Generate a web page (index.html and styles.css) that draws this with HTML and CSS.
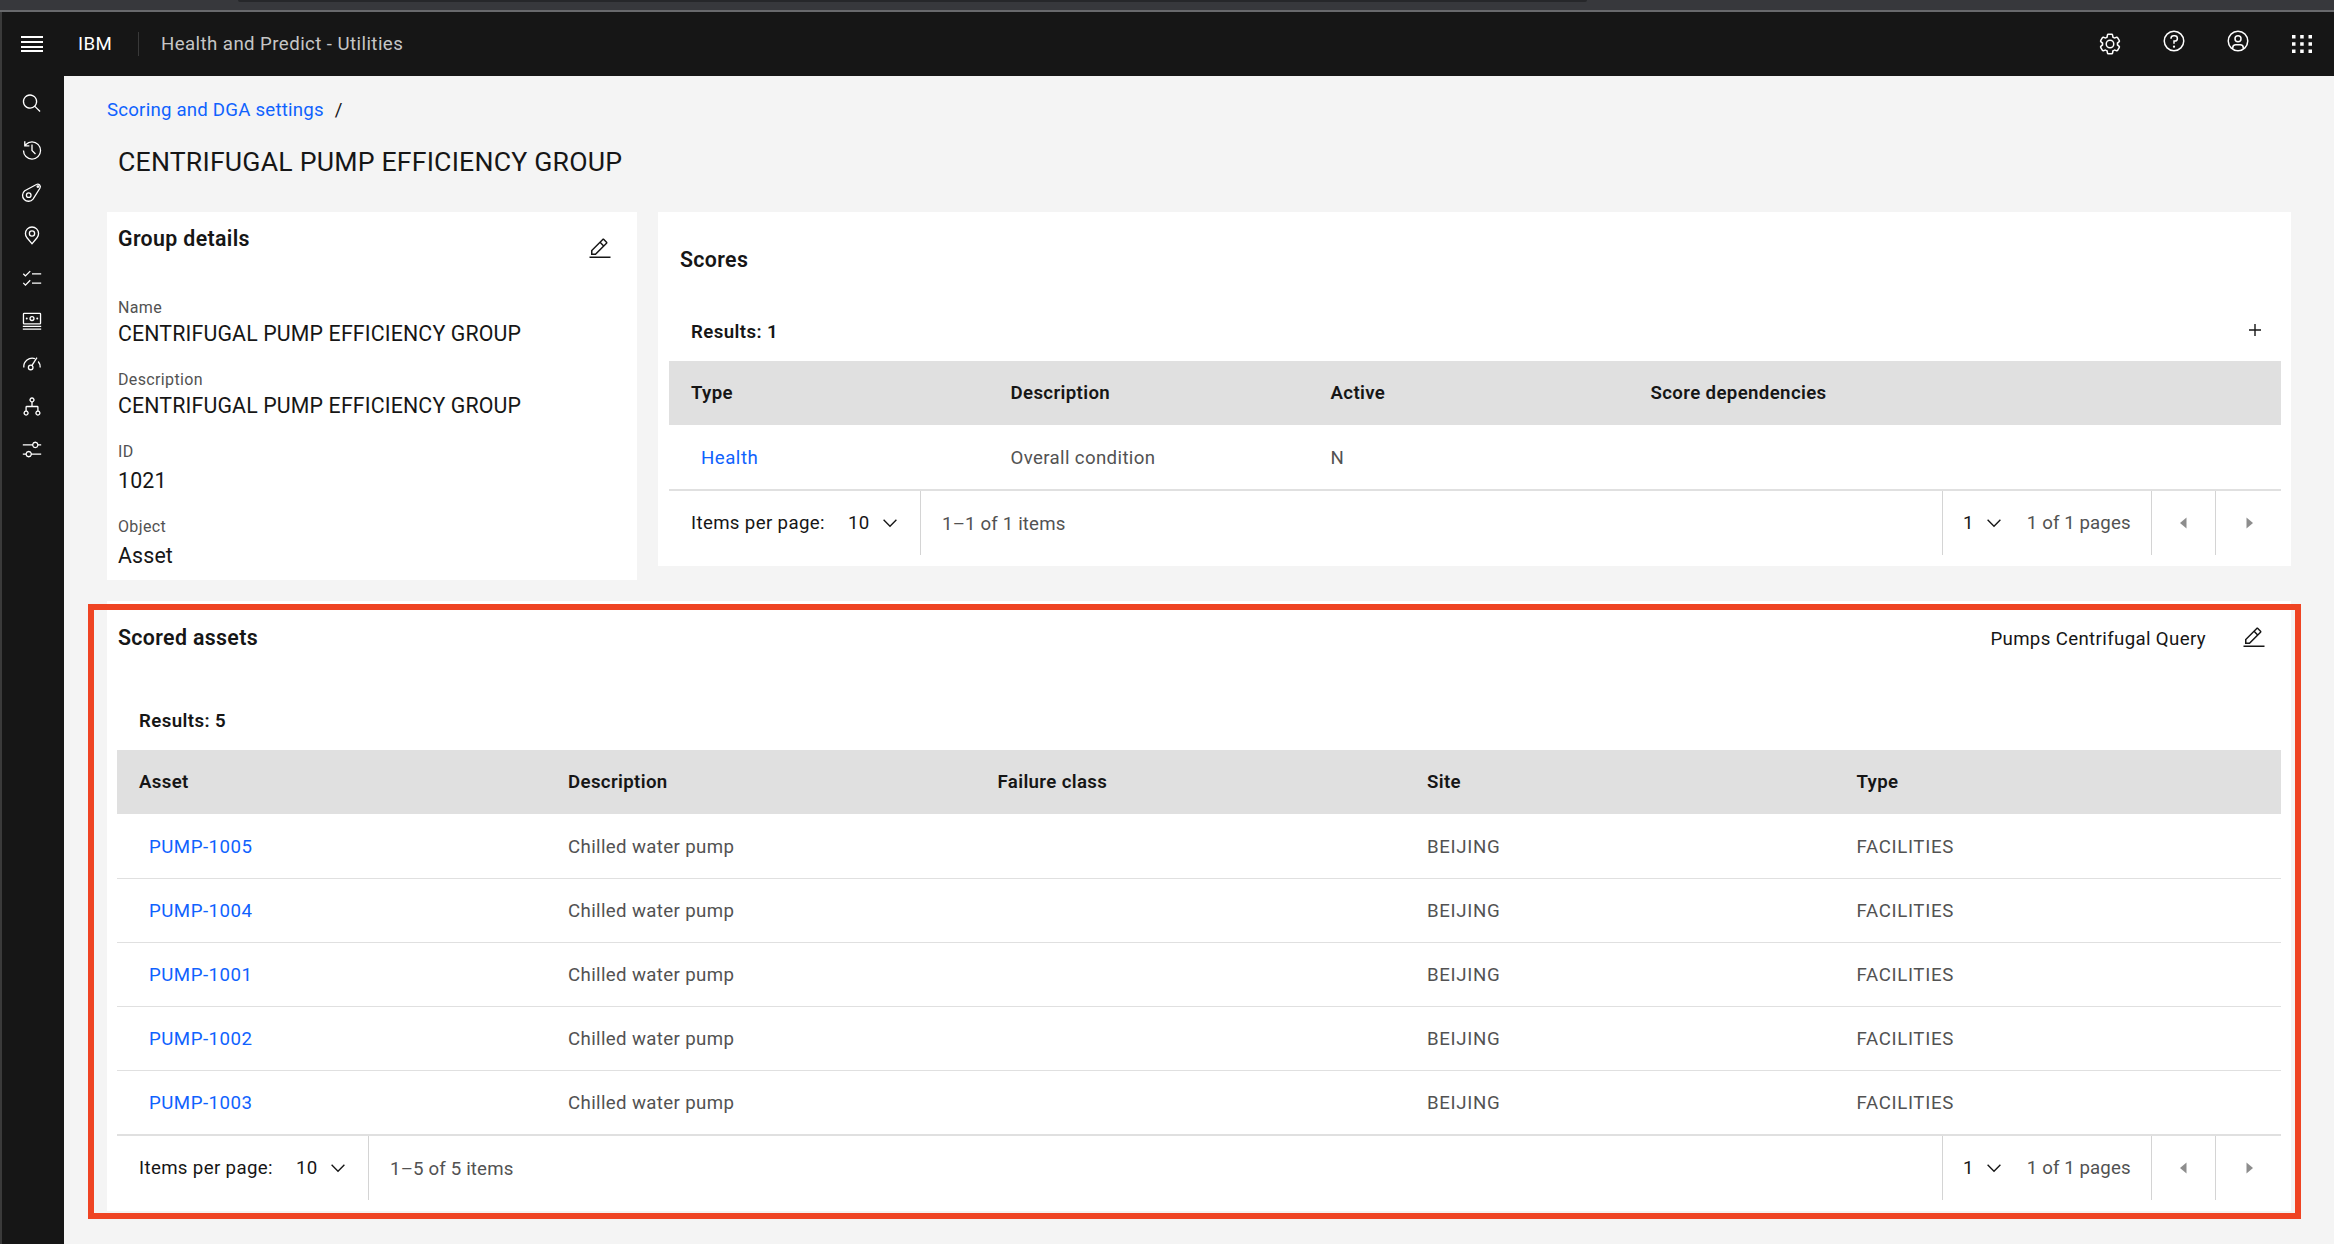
FILE: index.html
```html
<!DOCTYPE html>
<html lang="en">
<head>
    <meta charset="UTF-8">
    <meta name="viewport" content="width=device-width, initial-scale=1.0">
    <title>Health and Predict - Utilities</title>
    <link rel="stylesheet" href="styles.css">
</head>
<body>
    <svg class="sprites" xmlns="http://www.w3.org/2000/svg">
        <symbol id="i-edit" viewBox="0 0 32 32"><path d="M2 26H30V28H2zM25.4 9c.8-.8.8-2 0-2.8l-3.6-3.6c-.8-.8-2-.8-2.8 0l-15 15V24h6.4L25.4 9zM20.4 4L24 7.6l-3 3L17.4 7 20.4 4zM6 22v-3.6l10-10 3.6 3.6-10 10H6z"/></symbol>
        <symbol id="i-chevron" viewBox="0 0 16 16"><path d="M8 11L3 6l.7-.7L8 9.6l4.3-4.3.7.7z"/></symbol>
        <symbol id="i-prev" viewBox="0 0 16 16"><path d="M10.5 2.5v11L4 8z"/></symbol>
        <symbol id="i-next" viewBox="0 0 16 16"><path d="M5.5 2.5v11L12 8z"/></symbol>
    </svg>

    <div class="browser-strip"><div class="browser-tab"></div></div>

    <header class="topbar">
        <svg class="menu-icon" viewBox="0 0 22 18"><path d="M0 1h22v2H0zM0 6h22v2H0zM0 11h22v2H0zM0 15h22v2H0z"/></svg>
        <span class="brand">IBM</span>
        <span class="app-name">Health and Predict - Utilities</span>
        <div class="topbar-actions">
            <svg class="top-icon" viewBox="0 0 32 32"><path d="M27,16.76c0-.25,0-.5,0-.76s0-.51,0-.77l1.92-1.68A2,2,0,0,0,29.3,11L26.94,7a2,2,0,0,0-1.73-1,2,2,0,0,0-.64.1l-2.43.82a11.35,11.35,0,0,0-1.31-.75l-.51-2.52a2,2,0,0,0-2-1.61H13.64a2,2,0,0,0-2,1.61l-.51,2.52a11.48,11.48,0,0,0-1.32.75L7.43,6.06A2,2,0,0,0,6.79,6,2,2,0,0,0,5.06,7L2.7,11a2,2,0,0,0,.41,2.51L5,15.24c0,.25,0,.5,0,.76s0,.51,0,.77L3.11,18.45A2,2,0,0,0,2.7,21L5.06,25a2,2,0,0,0,1.73,1,2,2,0,0,0,.64-.1l2.43-.82a11.35,11.35,0,0,0,1.31.75l.51,2.52a2,2,0,0,0,2,1.61h4.72a2,2,0,0,0,2-1.61l.51-2.52a11.48,11.48,0,0,0,1.32-.75l2.42.82a2,2,0,0,0,.64.1,2,2,0,0,0,1.73-1L29.3,21a2,2,0,0,0-.41-2.51ZM25.21,24l-3.43-1.16a8.86,8.86,0,0,1-2.71,1.57L18.36,28H13.64l-.71-3.55a9.36,9.36,0,0,1-2.7-1.57L6.79,24,4.43,20l2.72-2.4a8.9,8.9,0,0,1,0-3.13L4.43,12,6.79,8l3.43,1.16a8.86,8.86,0,0,1,2.71-1.57L13.64,4h4.72l.71,3.55a9.36,9.36,0,0,1,2.7,1.57L25.21,8,27.57,12l-2.72,2.4a8.9,8.9,0,0,1,0,3.13L27.57,20Z"/><path d="M16,22a6,6,0,1,1,6-6A5.94,5.94,0,0,1,16,22Zm0-10a3.91,3.91,0,0,0-4,4,3.91,3.91,0,0,0,4,4,3.91,3.91,0,0,0,4-4A3.91,3.91,0,0,0,16,12Z"/></svg>
            <svg class="top-icon up" viewBox="0 0 32 32"><path d="M16 2a14 14 0 1014 14A14 14 0 0016 2zm0 26a12 12 0 1112-12 12 12 0 01-12 12z"/><circle cx="16" cy="23.5" r="1.5"/><path d="M17 8h-1.5a4.49 4.49 0 00-4.5 4.5v.5h2v-.5a2.5 2.5 0 012.5-2.5H17a2.5 2.5 0 010 5h-2v4.5h2V17a4.5 4.5 0 000-9z"/></svg>
            <svg class="top-icon up" viewBox="0 0 32 32"><path d="M16 8a5 5 0 105 5 5 5 0 00-5-5zm0 8a3 3 0 113-3 3 3 0 01-3 3z"/><path d="M16 2a14 14 0 1014 14A14 14 0 0016 2zM10 26.37V25a3 3 0 013-3h6a3 3 0 013 3v1.37a11.9 11.9 0 01-12 0zm14-1.45V25a5 5 0 00-5-5H13a5 5 0 00-5 5v-.08a12 12 0 1116 0z"/></svg>
            <svg class="switcher" viewBox="0 0 20 18"><path d="M0 0h3.5v3.5H0zM8.2 0h3.5v3.5H8.2zM16.5 0H20v3.5h-3.5zM0 7.2h3.5v3.5H0zM8.2 7.2h3.5v3.5H8.2zM16.5 7.2H20v3.5h-3.5zM0 14.5h3.5V18H0zM8.2 14.5h3.5V18H8.2zM16.5 14.5H20V18h-3.5z"/></svg>
        </div>
    </header>

    <div class="shell">
        <nav class="sidenav">
            <svg class="nav-first" viewBox="0 0 32 32"><path d="M29 27.59l-7.55-7.55a11 11 0 10-1.41 1.41L27.59 29zM4 13a9 9 0 119 9 9 9 0 01-9-9z"/></svg>
            <svg viewBox="0 0 32 32"><path d="M20.59 22L15 16.41V7h2v8.58l5 5.01L20.59 22z"/><path d="M16 2A13.94 13.94 0 006 6.23V2H4v8h8V8H7.08A12 12 0 1116 28 12 12 0 014 16H2A14 14 0 1016 2z"/></svg>
            <svg class="nav-stroke" viewBox="0 0 32 32"><path d="M5 13.300L22.700 3.800A4 4 0 0128 9.500L17.600 26A9 9 0 115 13.300z"/><circle cx="11" cy="20" r="3.500"/><circle cx="25" cy="7" r="1.200"/></svg>
            <svg viewBox="0 0 32 32"><path d="M16 18a5 5 0 115-5 5 5 0 01-5 5zm0-8a3 3 0 103 3 3 3 0 00-3-3z"/><path d="M16 30l-8.440-9.950c-.05-.06-.35-.45-.35-.45A10.890 10.890 0 015 13a11 11 0 0122 0 10.880 10.880 0 01-2.210 6.600s-.3.390-.35.450zM8.810 18.400s.23.310.29.370L16 26.910l6.910-8.150c.04-.06.280-.37.280-.37A8.900 8.900 0 0025 13a9 9 0 00-18 0 8.910 8.910 0 001.810 5.400z"/></svg>
            <svg viewBox="0 0 32 32"><path d="M16 8h14v2H16zM16 22h14v2H16zM6 10.590L3.410 8 2 9.410l4 4 8-8L12.590 4zM6 24.590L3.410 22 2 23.410l4 4 8-8L12.590 18z"/></svg>
            <svg viewBox="0 0 32 32"><path d="M2 24h28v2H2zM2 28h28v2H2zM28 4H4a2 2 0 00-2 2v14a2 2 0 002 2h24a2 2 0 002-2V6a2 2 0 00-2-2zm0 16H4V6h24z"/><path d="M16 9a4 4 0 104 4 4 4 0 00-4-4zm0 6a2 2 0 112-2 2 2 0 01-2 2z"/><circle cx="8" cy="13" r="1.500"/><circle cx="24" cy="13" r="1.500"/></svg>
            <svg class="nav-stroke" viewBox="0 0 32 32"><path d="M3.500 22A13 13 0 0120.500 8.500"/><path d="M25.500 13A13 13 0 0128.500 22"/><path d="M16 19L23.500 7"/><circle cx="14" cy="22" r="3.500"/></svg>
            <svg viewBox="0 0 32 32"><path d="M26 22.100V17a2 2 0 00-2-2h-7v-5.100a4 4 0 10-2 0V15H8a2 2 0 00-2 2v5.100a4 4 0 102 0V17h16v5.100a4 4 0 102 0zM14 6a2 2 0 112 2 2 2 0 01-2-2zM9 26a2 2 0 11-2-2 2 2 0 012 2zm18 0a2 2 0 11-2-2 2 2 0 012 2z"/></svg>
            <svg viewBox="0 0 32 32"><path d="M30 8h-4.100a5 5 0 00-9.800 0H2v2h14.100a5 5 0 009.800 0H30zM21 12a3 3 0 113-3 3 3 0 01-3 3zM2 24h4.100a5 5 0 009.800 0H30v-2H15.900a5 5 0 00-9.800 0H2zm9-4a3 3 0 11-3 3 3 3 0 013-3z"/></svg>
        </nav>

        <main class="content">
            <div class="breadcrumb"><a href="#">Scoring and DGA settings</a><span class="crumb-sep">/</span></div>
            <h1 class="page-title">CENTRIFUGAL PUMP EFFICIENCY GROUP</h1>

            <div class="top-row">
                <section class="card details-card">
                    <div class="details-head">
                        <h2 class="card-title">Group details</h2>
                        <svg class="edit-icon"><use href="#i-edit"/></svg>
                    </div>
                    <div class="field"><div class="field-label">Name</div><div class="field-value">CENTRIFUGAL PUMP EFFICIENCY GROUP</div></div>
                    <div class="field"><div class="field-label">Description</div><div class="field-value">CENTRIFUGAL PUMP EFFICIENCY GROUP</div></div>
                    <div class="field field-low"><div class="field-label">ID</div><div class="field-value">1021</div></div>
                    <div class="field field-low"><div class="field-label">Object</div><div class="field-value">Asset</div></div>
                </section>

                <section class="card scores-card">
                    <h2 class="card-title">Scores</h2>
                    <div class="toolbar">
                        <span class="results">Results: 1</span>
                        <svg class="plus-icon" viewBox="0 0 12 12"><path d="M5.300 0h1.400v5.300H12v1.400H6.700V12H5.300V6.700H0V5.300h5.300z"/></svg>
                    </div>
                    <table class="data-table scores-table">
                        <thead><tr><th>Type</th><th>Description</th><th>Active</th><th>Score dependencies</th></tr></thead>
                        <tbody><tr><td><a href="#">Health</a></td><td>Overall condition</td><td>N</td><td></td></tr></tbody>
                    </table>
                    <div class="pager">
                        <div class="pager-size"><span>Items per page:</span><span class="pager-num">10</span><svg class="chevron"><use href="#i-chevron"/></svg></div>
                        <div class="pager-count">1–1 of 1 items</div>
                        <div class="pager-page"><span class="pager-num">1</span><svg class="chevron"><use href="#i-chevron"/></svg><span class="pager-of">1 of 1 pages</span></div>
                        <div class="pager-btn"><svg class="caret"><use href="#i-prev"/></svg></div>
                        <div class="pager-btn pager-last"><svg class="caret"><use href="#i-next"/></svg></div>
                    </div>
                </section>
            </div>

            <section class="card assets-card">
                <div class="assets-head">
                    <h2 class="card-title">Scored assets</h2>
                    <span class="query-name">Pumps Centrifugal Query</span>
                    <svg class="edit-icon"><use href="#i-edit"/></svg>
                </div>
                <div class="results assets-results">Results: 5</div>
                <table class="data-table assets-table">
                    <thead><tr><th>Asset</th><th>Description</th><th>Failure class</th><th>Site</th><th>Type</th></tr></thead>
                    <tbody id="assetRows"></tbody>
                </table>
                <div class="pager">
                    <div class="pager-size"><span>Items per page:</span><span class="pager-num">10</span><svg class="chevron"><use href="#i-chevron"/></svg></div>
                    <div class="pager-count">1–5 of 5 items</div>
                    <div class="pager-page"><span class="pager-num">1</span><svg class="chevron"><use href="#i-chevron"/></svg><span class="pager-of">1 of 1 pages</span></div>
                    <div class="pager-btn"><svg class="caret"><use href="#i-prev"/></svg></div>
                    <div class="pager-btn pager-last"><svg class="caret"><use href="#i-next"/></svg></div>
                </div>
                <div class="callout"></div>
            </section>
        </main>
    </div>

    <script>
        const assets = ["PUMP-1005", "PUMP-1004", "PUMP-1001", "PUMP-1002", "PUMP-1003"];
        document.getElementById('assetRows').innerHTML = assets.map(asset =>
            `<tr><td><a href="#">${asset}</a></td><td>Chilled water pump</td><td></td><td class="caps">BEIJING</td><td class="caps">FACILITIES</td></tr>`
        ).join('');
    </script>
</body>
</html>
```

FILE: styles.css
```css
* {
    box-sizing: border-box;
}

body {
    margin: 0;
    height: 1244px;
    overflow: hidden;
    background: #f4f4f4;
    color: #161616;
    font-family: Roboto, "Noto Sans", sans-serif;
    font-size: 18.67px;
    letter-spacing: 0.36px;
}

a {
    color: #0f62fe;
    text-decoration: none;
}

.sprites {
    display: none;
}

.browser-strip {
    height: 12px;
    background: #37383c;
    border-bottom: 2px solid #68696c;
    padding-left: 238px;
}

.browser-tab {
    width: 1349px;
    height: 2px;
    background: #26272a;
    border-radius: 0 0 6px 6px;
}

.topbar {
    height: 64px;
    background: #161616;
    border-left: 2px solid #3a3a3a;
    display: flex;
    align-items: center;
    color: #fff;
}

.menu-icon {
    width: 22px;
    height: 18px;
    margin-left: 19px;
    fill: #fff;
}

.brand {
    margin-left: 35px;
    width: 30px;
}

.app-name {
    margin-left: 30px;
    padding-left: 22px;
    height: 24px;
    line-height: 24px;
    border-left: 1px solid #393939;
    color: #c6c6c6;
    letter-spacing: 0.42px;
}

.topbar-actions {
    margin-left: auto;
    display: flex;
    align-items: center;
    padding-right: 22px;
}

.top-icon {
    width: 24px;
    height: 24px;
    margin-right: 40px;
    fill: #fff;
}

.top-icon.up {
    position: relative;
    top: -3px;
}

.switcher {
    width: 20px;
    height: 18px;
    margin-left: 2px;
    fill: #fff;
}

.shell {
    display: flex;
    height: 1168px;
}

.sidenav {
    width: 64px;
    flex: none;
    background: #161616;
    border-left: 2px solid #3a3a3a;
    padding: 17px 0 0 19px;
    display: flex;
    flex-direction: column;
    gap: 21.7px;
}

.sidenav svg {
    width: 22px;
    height: 21px;
    fill: #fff;
}

.sidenav .nav-first {
    margin-bottom: 4px;
}

.sidenav .nav-stroke {
    fill: none;
    stroke: #fff;
    stroke-width: 2;
}

.content {
    flex: 1;
    min-width: 0;
    padding: 22px 43px 0;
}

.breadcrumb {
    height: 24px;
    line-height: 24px;
    letter-spacing: 0.21px;
}

.crumb-sep {
    margin-left: 11px;
}

.page-title {
    margin: 22px 0 0 11px;
    height: 36px;
    line-height: 36px;
    font-size: 26.67px;
    font-weight: 400;
    letter-spacing: 0.2px;
}

.top-row {
    display: flex;
    align-items: flex-start;
    gap: 21px;
    margin-top: 32px;
}

.card {
    background: #fff;
}

.card-title {
    margin: 0;
    font-size: 21.33px;
    font-weight: 600;
    letter-spacing: 0.35px;
    line-height: 28px;
}

.details-card {
    width: 530px;
    height: 368px;
    padding: 13px 25px 0 11px;
}

.details-head {
    display: flex;
    justify-content: space-between;
    align-items: flex-start;
    height: 73px;
}

.edit-icon {
    width: 24px;
    height: 24px;
    fill: #161616;
}

.details-head .edit-icon {
    margin-top: 12px;
}

.field {
    height: 72px;
}

.field-label {
    font-size: 16px;
    line-height: 20px;
    color: #525252;
}

.field-value {
    font-size: 21.33px;
    line-height: 32px;
    letter-spacing: 0.15px;
}

.field-low {
    height: 75px;
}

.field-low .field-value {
    margin-top: 3px;
}

.scores-card {
    flex: 1;
    height: 354px;
    padding: 34px 10px 0 11px;
}

.scores-card .card-title {
    margin-left: 11px;
}

.toolbar {
    display: flex;
    justify-content: space-between;
    align-items: center;
    height: 87px;
    padding: 29px 20px 0 22px;
}

.results {
    font-weight: 600;
    letter-spacing: 0.4px;
}

.plus-icon {
    width: 12px;
    height: 12px;
    margin-top: -5px;
    fill: #161616;
}

.data-table {
    width: 100%;
    border-collapse: collapse;
    table-layout: fixed;
}

.data-table th {
    height: 64px;
    background: #e0e0e0;
    padding: 0 0 0 22px;
    text-align: left;
    font-weight: 600;
}

.data-table td {
    height: 64px;
    padding: 2px 0 0 22px;
    color: #525252;
    border-bottom: 1px solid #e0e0e0;
}

.data-table td:first-child {
    padding-left: 32px;
    letter-spacing: 0.5px;
}

.data-table td.caps {
    letter-spacing: 0.66px;
}

.scores-table th:nth-child(-n+3) {
    width: 320px;
}

.scores-table th:first-child {
    width: 319.5px;
}

.assets-table th:nth-child(-n+4) {
    width: 429.5px;
}

.assets-table th:first-child {
    width: 429px;
}

.pager {
    display: flex;
    height: 66px;
    border-top: 2px solid #e0e0e0;
    margin-top: -1px;
}

.pager-size {
    display: flex;
    align-items: center;
    padding: 1px 0 0 22px;
    height: 64px;
    border-right: 1px solid #d4d4d4;
    width: 252px;
}

.pager-num {
    margin-left: 23px;
}

.chevron {
    width: 22px;
    height: 22px;
    margin-left: 9px;
    fill: #161616;
}

.pager-count {
    flex: 1;
    height: 64px;
    line-height: 66px;
    padding-left: 21px;
    color: #525252;
    letter-spacing: 0.16px;
}

.pager-page {
    display: flex;
    align-items: center;
    width: 209px;
    height: 64px;
    padding: 1px 0 0 20px;
    border-left: 1px solid #d4d4d4;
}

.pager-page .pager-num {
    margin-left: 0;
}

.pager-of {
    margin-left: 22px;
    color: #525252;
    letter-spacing: 0.1px;
}

.pager-btn {
    width: 64px;
    height: 64px;
    display: flex;
    align-items: center;
    justify-content: center;
    border-left: 1px solid #d4d4d4;
}

.pager-last {
    width: 66px;
}

.caret {
    width: 16px;
    height: 16px;
    fill: #8d8d8d;
}

.assets-card {
    position: relative;
    height: 610px;
    margin-top: 21px;
    padding: 23px 10px 0 10px;
}

.assets-head {
    display: flex;
    align-items: center;
    height: 28px;
    padding-left: 1px;
}

.assets-head .card-title {
    flex: 1;
}

.assets-head .edit-icon {
    margin-left: 36px;
    margin-right: 15px;
}

.query-name {
    margin-top: 2px;
}

.assets-results {
    margin-top: 55px;
    padding-left: 22px;
    height: 43px;
    line-height: 28px;
}

.callout {
    position: absolute;
    left: -19px;
    top: 3px;
    width: 2213px;
    height: 615px;
    border: 6px solid #ef4423;
}
```
